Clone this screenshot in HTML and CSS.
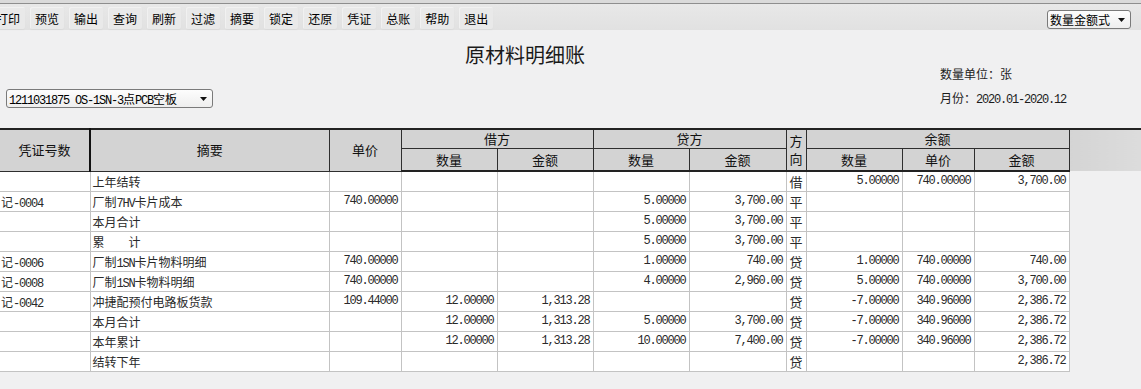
FILE: index.html
```html
<!DOCTYPE html>
<html lang="zh-CN">
<head>
    <meta charset="UTF-8">
    <title>原材料明细账</title>
    <link rel="stylesheet" href="styles.css">
</head>
<body>
    <div class="topline"></div>
    <nav class="toolbar">
        <span class="tool first">打印</span>
        <span class="tool">预览</span>
        <span class="tool">输出</span>
        <span class="tool">查询</span>
        <span class="tool">刷新</span>
        <span class="tool">过滤</span>
        <span class="tool">摘要</span>
        <span class="tool">锁定</span>
        <span class="tool">还原</span>
        <span class="tool">凭证</span>
        <span class="tool">总账</span>
        <span class="tool">帮助</span>
        <span class="tool">退出</span>
        <div class="select mode-select">
            <span>数量金额式</span>
            <svg class="caret" width="7" height="4" viewBox="0 0 7 4"><path d="M0 0H7L3.5 4Z" fill="#111"/></svg>
        </div>
    </nav>

    <header class="head">
        <div class="pick">
            <div class="select item-select">
                <span><span class="m">1211031875 OS-1SN-3</span>点<span class="m">PCB</span>空板</span>
                <svg class="caret" width="7" height="4" viewBox="0 0 7 4"><path d="M0 0H7L3.5 4Z" fill="#111"/></svg>
            </div>
        </div>
        <h1 class="title">原材料明细账</h1>
        <div class="meta">
            <div>数量单位：张</div>
            <div>月份：<span class="m">2020.01-2020.12</span></div>
        </div>
    </header>

    <table class="ledger">
        <colgroup>
            <col class="c-no">
            <col class="c-memo">
            <col class="c-price">
            <col class="c-q"><col class="c-amt">
            <col class="c-q"><col class="c-amt2">
            <col class="c-dir">
            <col class="c-q"><col class="c-price"><col class="c-q2">
            <col class="c-rest">
        </colgroup>
        <thead>
            <tr class="h1">
                <th rowspan="2" class="no">凭证号数</th>
                <th rowspan="2">摘要</th>
                <th rowspan="2">单价</th>
                <th colspan="2">借方</th>
                <th colspan="2">贷方</th>
                <th rowspan="2" class="dir">方<br>向</th>
                <th colspan="3">余额</th>
                <th rowspan="2" class="rest"></th>
            </tr>
            <tr class="h2">
                <th>数量</th><th>金额</th>
                <th>数量</th><th>金额</th>
                <th>数量</th><th>单价</th><th>金额</th>
            </tr>
        </thead>
        <tbody>
            <tr>
                <td></td><td>上年结转</td><td class="n"></td>
                <td class="n"></td><td class="n"></td><td class="n"></td><td class="n"></td>
                <td class="dir">借</td>
                <td class="n">5.00000</td><td class="n">740.00000</td><td class="n">3,700.00</td>
                <td class="rest"></td>
            </tr>
            <tr>
                <td>记<span class="m">-0004</span></td><td>厂制<span class="m">7HV</span>卡片成本</td><td class="n">740.00000</td>
                <td class="n"></td><td class="n"></td><td class="n">5.00000</td><td class="n">3,700.00</td>
                <td class="dir">平</td>
                <td class="n"></td><td class="n"></td><td class="n"></td>
                <td class="rest"></td>
            </tr>
            <tr>
                <td></td><td>本月合计</td><td class="n"></td>
                <td class="n"></td><td class="n"></td><td class="n">5.00000</td><td class="n">3,700.00</td>
                <td class="dir">平</td>
                <td class="n"></td><td class="n"></td><td class="n"></td>
                <td class="rest"></td>
            </tr>
            <tr>
                <td></td><td>累　　计</td><td class="n"></td>
                <td class="n"></td><td class="n"></td><td class="n">5.00000</td><td class="n">3,700.00</td>
                <td class="dir">平</td>
                <td class="n"></td><td class="n"></td><td class="n"></td>
                <td class="rest"></td>
            </tr>
            <tr>
                <td>记<span class="m">-0006</span></td><td>厂制<span class="m">1SN</span>卡片物料明细</td><td class="n">740.00000</td>
                <td class="n"></td><td class="n"></td><td class="n">1.00000</td><td class="n">740.00</td>
                <td class="dir">贷</td>
                <td class="n">1.00000</td><td class="n">740.00000</td><td class="n">740.00</td>
                <td class="rest"></td>
            </tr>
            <tr>
                <td>记<span class="m">-0008</span></td><td>厂制<span class="m">1SN</span>卡物料明细</td><td class="n">740.00000</td>
                <td class="n"></td><td class="n"></td><td class="n">4.00000</td><td class="n">2,960.00</td>
                <td class="dir">贷</td>
                <td class="n">5.00000</td><td class="n">740.00000</td><td class="n">3,700.00</td>
                <td class="rest"></td>
            </tr>
            <tr>
                <td>记<span class="m">-0042</span></td><td>冲捷配预付电路板货款</td><td class="n">109.44000</td>
                <td class="n">12.00000</td><td class="n">1,313.28</td><td class="n"></td><td class="n"></td>
                <td class="dir">贷</td>
                <td class="n">-7.00000</td><td class="n">340.96000</td><td class="n">2,386.72</td>
                <td class="rest"></td>
            </tr>
            <tr>
                <td></td><td>本月合计</td><td class="n"></td>
                <td class="n">12.00000</td><td class="n">1,313.28</td><td class="n">5.00000</td><td class="n">3,700.00</td>
                <td class="dir">贷</td>
                <td class="n">-7.00000</td><td class="n">340.96000</td><td class="n">2,386.72</td>
                <td class="rest"></td>
            </tr>
            <tr>
                <td></td><td>本年累计</td><td class="n"></td>
                <td class="n">12.00000</td><td class="n">1,313.28</td><td class="n">10.00000</td><td class="n">7,400.00</td>
                <td class="dir">贷</td>
                <td class="n">-7.00000</td><td class="n">340.96000</td><td class="n">2,386.72</td>
                <td class="rest"></td>
            </tr>
            <tr>
                <td></td><td>结转下年</td><td class="n"></td>
                <td class="n"></td><td class="n"></td><td class="n"></td><td class="n"></td>
                <td class="dir">贷</td>
                <td class="n"></td><td class="n"></td><td class="n">2,386.72</td>
                <td class="rest"></td>
            </tr>
        </tbody>
    </table>
</body>
</html>
```

FILE: styles.css
```css
body {
    margin: 0;
    width: 1141px;
    height: 389px;
    overflow: hidden;
    background: #f0f0f1;
    font-family: "Noto Sans CJK SC", sans-serif;
    font-size: 12px;
    color: #1c1c1c;
}

/* half-width runs, SimSun-like 6px advance */
.m {
    font-family: "Liberation Mono", monospace;
    font-size: 12px;
    letter-spacing: -1.2px;
    line-height: 1;
}

.topline {
    height: 3px;
    background: #dadada;
    border-bottom: 1px solid #8e8e8e;
}

.toolbar {
    display: flex;
    align-items: flex-end;
    height: 26px;
    background: linear-gradient(#e8e8e8, #e1e1e1);
}

.tool {
    height: 22px;
    line-height: 23px;
    padding: 0 5px;
    margin: 0 5px 1px 0;
    background: #e9e9e9;
    border-radius: 2px;
    box-shadow: inset 1px 1px 0 #f1f1f1, 0 1px 1px #dadada;
    color: #000;
}

.tool.first {
    margin-left: -9px;
}

.select {
    display: flex;
    align-items: center;
    justify-content: space-between;
    box-sizing: border-box;
    height: 19px;
    padding: 0 5px 0 2px;
    border: 1px solid #7a7a7a;
    border-radius: 3px;
    background: linear-gradient(#fdfdfd, #eeeeee);
    color: #000;
    line-height: 17px;
}

.mode-select {
    width: 84px;
    margin: 0 10px 1px auto;
}

.item-select {
    width: 207px;
}

.head {
    display: grid;
    grid-template-columns: 465px 475px 1fr;
    height: 98px;
}

.pick {
    padding: 59px 0 0 6px;
}

.title {
    margin: 0;
    padding-top: 13px;
    font-size: 20px;
    font-weight: normal;
    line-height: 24px;
    color: #1a1a1a;
}

.meta {
    display: flex;
    flex-direction: column;
    gap: 8px;
    padding-top: 36px;
    line-height: 16px;
}

.ledger {
    width: 1141px;
    table-layout: fixed;
    border-collapse: collapse;
}

.c-no { width: 90px; }
.c-memo { width: 239px; }
.c-price { width: 72px; }
.c-q { width: 96px; }
.c-amt { width: 96px; }
.c-amt2 { width: 97px; }
.c-dir { width: 20px; }
.c-q2 { width: 95px; }
.c-rest { width: 73px; }

.ledger th {
    padding: 0;
    background: #d3d3d3;
    border: 1px solid #2e2e2e;
    font-size: 13px;
    font-weight: normal;
    color: #111;
}

.ledger thead tr.h1 th {
    border-top: 2px solid #222;
    height: 18px;
    line-height: 18px;
}

.ledger thead tr.h2 th {
    border-bottom: 2px solid #222;
    height: 21px;
    line-height: 21px;
}

.ledger th.no {
    border-left: none;
    border-right: 2px solid #111;
}

.ledger th.dir {
    line-height: 17px;
    border-bottom: 2px solid #222;
}

.ledger th.rest {
    border-right: none;
    border-bottom: none;
    background: linear-gradient(90deg, #d4d4d4, #dcdcdc);
}

.ledger td {
    height: 19px;
    padding: 0 2px;
    background: #fff;
    border: 1px solid #c3c3c3;
    line-height: 19px;
    white-space: nowrap;
    overflow: hidden;
    color: #2a2a2a;
}

.ledger td:first-child {
    border-left: none;
    padding-left: 1px;
}

.ledger td.n {
    padding-right: 3px;
    text-align: right;
    font-family: "Liberation Mono", monospace;
    font-size: 12px;
    letter-spacing: -1.2px;
}

.ledger td.dir {
    padding: 0;
    text-align: center;
    font-size: 13px;
}

.ledger td.rest {
    background: transparent;
    border-top: none;
    border-bottom: none;
    border-right: none;
}
```
